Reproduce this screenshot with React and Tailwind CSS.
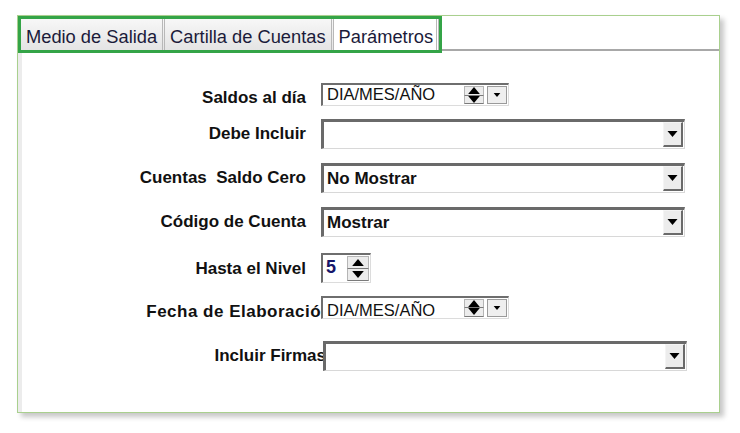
const FONT = { fontFamily: '"Liberation Sans", Arial, sans-serif' };

function ArrowUp({ w = 10, h = 6 }) {
  return (
    <svg width={w} height={h} viewBox="0 0 10 6">
      <polygon points="5,0 10,6 0,6" fill="#000" />
    </svg>
  );
}

function ArrowDown({ w = 10, h = 6 }) {
  return (
    <svg width={w} height={h} viewBox="0 0 10 6">
      <polygon points="0,0 10,0 5,6" fill="#000" />
    </svg>
  );
}

function Spin({ className }) {
  return (
    <div className={'flex flex-col bg-[#ececec] ' + className}>
      <div className="flex flex-1 items-center justify-center border border-[#b5b5b5] border-b-[#7a7a7a]">
        <ArrowUp w={12} h={7} />
      </div>
      <div className="flex flex-1 items-center justify-center border border-t-0 border-[#b5b5b5] border-b-[#7a7a7a]">
        <ArrowDown w={12} h={7} />
      </div>
    </div>
  );
}

function DateBox({ textPad = '' }) {
  return (
    <div className="relative z-10 flex h-[23px] w-[188px] items-stretch border-t-2 border-l-2 border-b border-r border-t-[#6e6e6e] border-l-[#6e6e6e] border-b-[#dcdcdc] border-r-[#dcdcdc] bg-white">
      <div className={'flex-1 pl-[4px] text-[16.5px] leading-[19px] text-[#111] ' + textPad}>DIA/MES/AÑO</div>
      <Spin className="my-[1px] w-[20px]" />
      <div className="ml-[3px] mr-[1px] my-[1px] flex w-[20px] items-center justify-center border border-[#9a9a9a] bg-[#efefef]">
        <ArrowDown w={8} h={4} />
      </div>
    </div>
  );
}

function Select({ value }) {
  return (
    <div className="relative z-10 flex h-[30px] w-[364px] items-stretch border-t-[3px] border-l-[3px] border-b border-r border-t-[#6a6a6a] border-l-[#6a6a6a] border-b-[#d8d8d8] border-r-[#d8d8d8] bg-white">
      <div className="flex flex-1 items-center pl-[3px] text-[17px] font-bold text-[#111]">{value}</div>
      <div className="mb-[1px] mr-[1px] flex w-[20px] items-center justify-center border-b-2 border-r-2 border-t border-l border-b-[#6a6a6a] border-r-[#6a6a6a] border-t-[#f4f4f4] border-l-[#f4f4f4] bg-[#ececec]">
        <ArrowDown w={11} h={6} />
      </div>
    </div>
  );
}

function Row({ label, children, mt, h, labelW = 'w-[284px]', labelShift = '', gap = 'ml-[15px]' }) {
  return (
    <div className="flex items-center" style={{ marginTop: mt, height: h }}>
      <div className={'shrink-0 whitespace-pre text-right text-[17px] font-bold leading-[20px] text-[#111] ' + labelW + ' ' + labelShift}>
        {label}
      </div>
      <div className={gap}>{children}</div>
    </div>
  );
}

export default function App() {
  const tabs = ['Medio de Salida', 'Cartilla de Cuentas', 'Parámetros'];
  return (
    <div className="h-[433px] w-[740px] bg-white pt-[15px] pl-[17px]" style={FONT}>
      <div className="flex h-[398px] w-[703px] flex-col border border-[#a9d08e] shadow-[4px_4px_5px_rgba(0,0,0,0.22)]">
        <div className="flex h-[37px] shrink-0">
          <div className="flex border-[3px] border-[#34a447] bg-white">
            {tabs.map((t, i) => (
              <div
                key={t}
                className={
                  'flex items-center px-[5px] pt-[5px] text-[18.3px] text-[#1b1b3a] border-r-[3px] border-double border-r-[#b8b8b8] ' +
                  (i === 2 ? 'bg-white border-r-0 pr-[3px]' : 'bg-gradient-to-b from-[#f7f7f7] to-[#e4e4e4]')
                }
              >
                {t}
              </div>
            ))}
          </div>
          <div className="mb-[2px] flex-1 border-b-2 border-[#a8a8a8]" />
        </div>
        <div className="flex-1 border-l-[4px] border-[#ececec]">
          <Row label="Saldos al día" mt={30} h={23} labelShift="translate-y-[3px]">
            <DateBox />
          </Row>
          <Row label="Debe Incluir" mt={13} h={30}>
            <Select value="" />
          </Row>
          <Row label="Cuentas  Saldo Cero" mt={14} h={30}>
            <Select value="No Mostrar" />
          </Row>
          <Row label="Código de Cuenta" mt={14} h={30}>
            <Select value="Mostrar" />
          </Row>
          <Row label="Hasta el Nivel" mt={16} h={30} labelShift="translate-y-[1px]">
            <div className="flex h-[30px] w-[50px] items-stretch border-t-2 border-l-2 border-b border-r border-t-[#6e6e6e] border-l-[#6e6e6e] border-b-[#dcdcdc] border-r-[#dcdcdc] bg-white">
              <div className="flex-1 pl-[3px] pt-[1px] text-[18px] font-bold leading-[22px] text-[#16166a]">5</div>
              <Spin className="my-[1px] mr-[1px] w-[22px]" />
            </div>
          </Row>
          <Row label="Fecha de Elaboración" mt={13} h={22} labelW="w-[310px] tracking-[0.5px]" labelShift="translate-y-[5px]" gap="ml-[-11px]">
            <DateBox textPad="pt-[3px]" />
          </Row>
          <Row label="Incluir Firmas" mt={23} h={30} labelW="w-[304px]" gap="ml-[-3px]">
            <Select value="" />
          </Row>
        </div>
      </div>
    </div>
  );
}
